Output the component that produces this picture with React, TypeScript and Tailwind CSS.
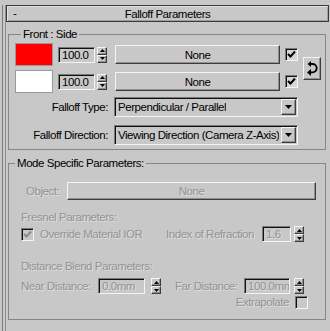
import React from "react";

const font = "font-['Liberation_Sans',Arial,sans-serif]";
const raised =
  "border border-t-[#f4f4f4] border-l-[#f4f4f4] border-r-[#3c3c3c] border-b-[#3c3c3c] shadow-[inset_-1px_-1px_0_#909090] bg-[#c8c8c8]";
const sunken =
  "border border-t-[#7a7a7a] border-l-[#7a7a7a] border-r-[#f4f4f4] border-b-[#f4f4f4] shadow-[inset_1px_1px_0_#101010]";
const dim = "text-[#949494] [text-shadow:1px_1px_0_#dedede]";

function Spinner() {
  return (
    <div className="flex flex-col w-[10px] h-[16px]">
      <div className={`${raised} flex-1 flex items-center justify-center`}>
        <svg width="5" height="3" viewBox="0 0 5 3">
          <path d="M0 3 L2.5 0 L5 3 Z" fill="#000" />
        </svg>
      </div>
      <div className={`${raised} flex-1 flex items-center justify-center`}>
        <svg width="5" height="3" viewBox="0 0 5 3">
          <path d="M0 0 L2.5 3 L5 0 Z" fill="#000" />
        </svg>
      </div>
    </div>
  );
}

function Field({ value, w, disabled }: { value: string; w: string; disabled?: boolean }) {
  return (
    <div
      className={`${sunken} ${w} h-[16px] flex items-center pl-[3px] overflow-hidden whitespace-nowrap ${
        disabled ? dim : "text-black"
      }`}
    >
      {value}
    </div>
  );
}

function Check({ checked, disabled }: { checked?: boolean; disabled?: boolean }) {
  return (
    <div
      className={`${sunken} w-[13px] h-[13px] flex items-center justify-center ${
        disabled ? "bg-[#c8c8c8]" : "bg-[#d6d6d6]"
      }`}
    >
      {checked && (
        <svg width="9" height="9" viewBox="0 0 9 9">
          <path d="M1 4 L3.5 6.5 L8 1.5" fill="none" stroke={disabled ? "#8a8a8a" : "#000"} strokeWidth="2" />
        </svg>
      )}
    </div>
  );
}

function Dropdown({ value }: { value: string }) {
  return (
    <div className={`${sunken} w-[184px] h-[20px] flex items-center justify-between pl-[3px] pr-[1px] whitespace-nowrap`}>
      <span className="overflow-hidden">{value}</span>
      <div className={`${raised} shrink-0 w-[15px] h-[16px] flex items-center justify-center`}>
        <svg width="7" height="4" viewBox="0 0 7 4">
          <path d="M0 0 L3.5 4 L7 0 Z" fill="#000" />
        </svg>
      </div>
    </div>
  );
}

export default function App() {
  return (
    <div
      className={`w-[330px] h-[331px] bg-[#c8c8c8] overflow-hidden pt-[13px] text-[11.5px] leading-[14px] tracking-[-0.45px] text-black ${font}`}
    >
      {/* rollout edge */}
      <div className="ml-[2px] h-[330px] border-l border-[#7c7c7c] pl-[2px]">
        <div className="h-full border-l border-[#8e8e8e]">
          {/* Title bar */}
          <div className="-mt-[8px] w-[323px] h-[17px] border border-[#3a3a3a] shadow-[inset_1px_1px_0_#e2e2e2,inset_-1px_-1px_0_#a0a0a0] grid grid-cols-[20px_1fr_20px] items-center">
            <span className="pl-[6px] -mt-[1px]">-</span>
            <span className="text-center">Falloff Parameters</span>
            <span />
          </div>

          {/* Front : Side */}
          <fieldset className="ml-[2px] mt-[5px] w-[318px] border border-[#868686] pb-[4px] pl-[6px]">
            <legend className="ml-[6px] px-[2px] leading-[14px]">Front : Side</legend>
            <div className="flex items-center mt-[2px]">
              <div className="flex flex-col gap-[4px]">
                <div className="flex items-center">
                  <div className="w-[38px] h-[23px] bg-[#ff0000] border border-[#9a9a9a]" />
                  <div className="ml-[5px] flex items-center gap-[2px]">
                    <Field value="100.0" w="w-[37px]" />
                    <Spinner />
                  </div>
                  <div className={`${raised} ml-[8px] w-[165px] h-[19px] flex items-center justify-center`}>None</div>
                  <div className="ml-[5px]">
                    <Check checked />
                  </div>
                </div>
                <div className="flex items-center">
                  <div className="w-[38px] h-[23px] bg-white border border-[#9a9a9a]" />
                  <div className="ml-[5px] flex items-center gap-[2px]">
                    <Field value="100.0" w="w-[37px]" />
                    <Spinner />
                  </div>
                  <div className={`${raised} ml-[8px] w-[165px] h-[19px] flex items-center justify-center`}>None</div>
                  <div className="ml-[5px]">
                    <Check checked />
                  </div>
                </div>
              </div>
              <div className={`${raised} ml-[5px] w-[18px] h-[23px] flex items-center justify-center`}>
                <svg width="12" height="17" viewBox="0 0 12 17">
                  <path d="M4 4 H6.5 A4.2 4.2 0 0 1 6.5 12.4 H5" fill="none" stroke="#000" strokeWidth="1.8" />
                  <path d="M1.5 4 L5 1 L5 7 Z" fill="#000" />
                  <path d="M1 12.4 L5 9 L5 16 Z" fill="#000" />
                </svg>
              </div>
            </div>

            <div className="flex items-center mt-[4px]">
              <div className="w-[93px] text-right whitespace-nowrap">Falloff Type:</div>
              <div className="ml-[6px]">
                <Dropdown value="Perpendicular / Parallel" />
              </div>
            </div>
            <div className="flex items-center mt-[8px]">
              <div className="w-[93px] text-right whitespace-nowrap">Falloff Direction:</div>
              <div className="ml-[6px]">
                <Dropdown value="Viewing Direction (Camera Z-Axis)" />
              </div>
            </div>
          </fieldset>

          {/* Mode Specific Parameters */}
          <fieldset className="ml-[2px] mt-[6px] w-[318px] border border-[#868686] pb-[10px]">
            <legend className="ml-[6px] px-[2px] leading-[14px]">Mode Specific Parameters:</legend>

            <div className="flex items-center mt-[12px] pl-[17px]">
              <span className={`${dim} w-[41px]`}>Object:</span>
              <div className={`${raised} w-[249px] h-[18px] flex items-center justify-center ${dim}`}>None</div>
            </div>

            <div className={`${dim} mt-[10px] pl-[12px]`}>Fresnel Parameters:</div>
            <div className="flex items-center mt-[2px] pl-[12px]">
              <div className="w-[145px] flex items-center">
                <Check checked disabled />
                <span className={`${dim} ml-[6px] whitespace-nowrap`}>Override Material IOR</span>
              </div>
              <span className={`${dim} w-[96px] whitespace-nowrap`}>Index of Refraction</span>
              <Field value="1.6" w="w-[29px]" disabled />
              <div className="ml-[3px]">
                <Spinner />
              </div>
            </div>

            <div className={`${dim} mt-[17px] pl-[12px]`}>Distance Blend Parameters:</div>
            <div className="flex items-center mt-[5px] pl-[12px]">
              <span className={`${dim} w-[77px] whitespace-nowrap`}>Near Distance:</span>
              <Field value="0.0mm" w="w-[47px]" disabled />
              <div className="ml-[6px]">
                <Spinner />
              </div>
              <span className={`${dim} ml-[14px] w-[69px] whitespace-nowrap`}>Far Distance:</span>
              <Field value="100.0mm" w="w-[46px]" disabled />
              <div className="ml-[4px]">
                <Spinner />
              </div>
            </div>
            <div className="flex items-center justify-end mt-[1px] pr-[17px]">
              <span className={`${dim} mr-[6px]`}>Extrapolate</span>
              <Check disabled />
            </div>
          </fieldset>
        </div>
      </div>
    </div>
  );
}
